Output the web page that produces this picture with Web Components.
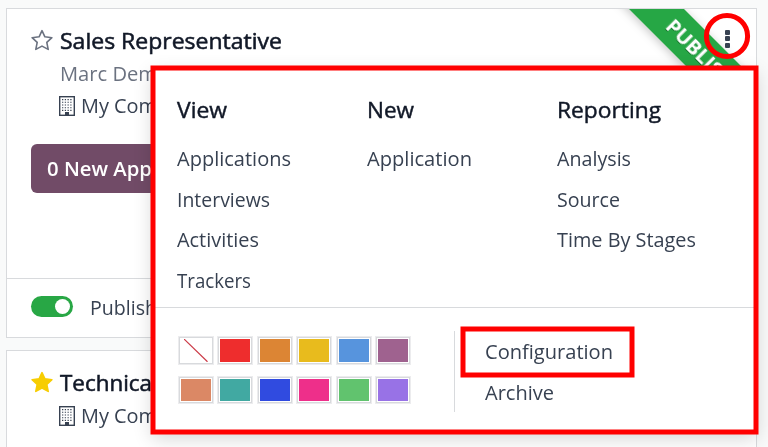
<!DOCTYPE html>
<html lang="en"><head><meta charset="utf-8"><title>Job positions</title>
<style>
html,body{margin:0;width:768px;height:447px;overflow:hidden}
body{background:#f9fafa;font-family:"Open Sans","Noto Sans",sans-serif;font-size:20.4px;color:#374151}
</style></head><body>
<job-board></job-board>
<script>
function define(name, html, setup){
  const t=document.createElement('template');t.innerHTML=html;
  customElements.define(name,class extends HTMLElement{
    constructor(){super();this.attachShadow({mode:'open'}).append(t.content.cloneNode(true));}
    connectedCallback(){if(setup)setup(this,this.shadowRoot);}
  });
}
/* Single line label condensed or expanded to the width given in "w". */
define('fit-label',`<style>:host{display:block;height:28px;line-height:28px;white-space:nowrap}
span{display:inline-block;transform-origin:0 50%}</style><span><slot></slot></span>`,(el,r)=>{
  const s=r.querySelector('span'),w=+el.getAttribute('w');
  el.style.width=w+'px';
  s.style.transform='none';
  const n=s.getBoundingClientRect().width;
  if(n)s.style.transform='scaleX('+w/n+')';
});
define('star-icon',`<style>:host{display:block;width:22px;height:22px;flex:none}svg{display:block}
path{fill:none;stroke:#6b7280;stroke-width:1.6;stroke-linejoin:round}:host([on]) path{fill:#f7cd02;stroke:#f7cd02}</style>
<svg width="22" height="22" viewBox="0 0 22 22"><path d="M11 1.6l2.9 6.2 7 .9-5.1 4.7 1.4 7L11 17.1l-6.2 3.3 1.4-7L1.1 8.7l7-.9z"/></svg>`);
define('building-icon',`<style>:host{display:block;width:16px;height:20px}svg{display:block}</style>
<svg width="16" height="20" viewBox="0 0 16 20"><rect x=".7" y=".7" width="14.6" height="18.6" fill="#fff" stroke="#374151" stroke-width="1.4"/>
<g stroke="#374151" stroke-width="1.1" stroke-dasharray="1.3 1.45"><path d="M3 3.6h10.2M3 6.3h10.2M3 9h10.2M3 11.7h10.2M3 14.4h10.2"/></g><path d="M6 19v-3h4v3z" fill="#374151"/></svg>`);
define('toggle-switch',`<style>:host{display:flex;box-sizing:border-box;width:42px;height:21px;border-radius:11px;background:#28a745;padding:3px;justify-content:flex-end}
i{width:15px;height:15px;border-radius:50%;background:#fff}</style><i></i>`);
define('job-card',`<style>:host{display:block;box-sizing:border-box;width:751px;background:#fff;border:1px solid #d8dadd;padding:0 24px;overflow:hidden;position:relative;flex:none}
.title{display:flex;gap:7px;font-size:22px;-webkit-text-stroke:.55px #111827;color:#111827}</style>
<div class="title"><slot name="star"></slot><slot name="title"></slot></div><slot></slot>`);
define('published-ribbon',`<style>:host{position:absolute;right:0;top:0;width:150px;height:90px}svg{display:block}
text{font:700 19.5px "Open Sans",sans-serif;fill:#fff}</style>
<svg width="150" height="90" viewBox="606 9 150 90"><defs><filter id="s" x="-20%" y="-50%" width="140%" height="200%"><feDropShadow dx="0" dy="3" stdDeviation="5" flood-opacity=".22"/></filter>
<filter id="t"><feDropShadow dx="0" dy="1" stdDeviation=".7" flood-opacity=".35"/></filter></defs>
<path filter="url(#s)" d="M608-12h55l110 110h-55z" fill="#28a745"/>
<text filter="url(#t)" transform="translate(664.5 27.5) rotate(45)" textLength="71" lengthAdjust="spacingAndGlyphs">PUBLIS</text></svg>`);
define('menu-column',`<style>:host{display:block;width:190px}h3{margin:0 0 21px;font-size:22px;font-weight:400;-webkit-text-stroke:.45px #111827;color:#111827;line-height:28px}
.items{display:grid;grid-auto-rows:28px;row-gap:12.6px}</style><h3><slot name="heading"></slot></h3><div class="items"><slot></slot></div>`);
define('color-swatch',`<style>:host{display:block;box-sizing:border-box;border:1px solid #ececee;background:#d8dadd;padding:1px}
div{box-sizing:border-box;height:100%;border:1px solid #fff;background:var(--c,#fff)}svg{display:none}:host([none]) svg{display:block;margin-left:3px}</style>
<div><svg width="24" height="23"><path d="M0 0l23.5 22.8" stroke="#cb3946" stroke-width="1.2"/></svg></div>`,(el)=>el.style.setProperty('--c',el.getAttribute('color')||'#fff'));
define('color-picker',`<style>:host{display:grid;grid-template-columns:repeat(6,36px);grid-template-rows:29px 28px;row-gap:11px;column-gap:3.4px;width:233px}</style>
<color-swatch none></color-swatch>`+['#ee2d2d','#dc8534','#e8bb1d','#5794dd','#9f628f','#db8865','#41a9a2','#304be0','#ee2f8a','#61c36e','#9872e6'].map(c=>`<color-swatch color="${c}"></color-swatch>`).join(''));
define('card-menu',`<style>:host{position:absolute;left:153px;top:68px;width:603px;height:364px;box-sizing:border-box;background:#fff;box-shadow:0 6px 18px 1px rgba(0,0,0,.16);padding-top:27px}
.top{display:flex;padding-left:24px;height:212px;border-bottom:1px solid #d8dadd}
.bottom{display:flex;padding:23px 0 0 25px}color-picker{margin-top:5px}
.links{margin-left:43px;border-left:1px solid #d8dadd;height:81px;padding-left:30px;box-sizing:border-box;display:grid;grid-template-rows:28px 28px;row-gap:12.6px;align-content:start;padding-top:6px}</style>
<div class="top">
<menu-column><fit-label slot="heading" w="50">View</fit-label><fit-label w="114">Applications</fit-label><fit-label w="93">Interviews</fit-label><fit-label w="82">Activities</fit-label><fit-label w="74">Trackers</fit-label></menu-column>
<menu-column><fit-label slot="heading" w="47">New</fit-label><fit-label w="105">Application</fit-label></menu-column>
<menu-column><fit-label slot="heading" w="104">Reporting</fit-label><fit-label w="74">Analysis</fit-label><fit-label w="63">Source</fit-label><fit-label w="139">Time By Stages</fit-label></menu-column>
</div>
<div class="bottom"><color-picker></color-picker><div class="links"><fit-label w="128">Configuration</fit-label><fit-label w="69">Archive</fit-label></div></div>`);
define('highlight-marks',`<style>:host{position:absolute;inset:0}svg{display:block}</style>
<svg width="768" height="447" fill="none" stroke="#f00" stroke-width="5"><rect x="153" y="68" width="603" height="364"/><rect x="463" y="329" width="169" height="46"/><circle cx="727" cy="36" r="20.6"/></svg>`);
define('kebab-icon',`<style>:host{position:absolute;left:725px;top:30px;display:grid;gap:1.3px}i{width:5px;height:5px;border-radius:1px;background:#374151}</style><i></i><i></i><i></i>`);
define('job-board',`<style>:host{display:flex;flex-direction:column;gap:12px;padding:8px 0 0 6px;position:relative;width:768px;height:447px;box-sizing:border-box;overflow:hidden}
.one{height:330px;padding-top:17px}.two{height:160px;padding-top:17px}
star-icon{margin-top:3px}
.mgr{color:#6b7280;padding:5px 0 0 29px}.co{display:flex;gap:6px;padding-left:28px;margin-top:4px}.co building-icon{margin-top:5px}
.btn{display:block;background:#714b67;color:#fff;font-weight:600;font-size:20px;border-radius:6px;height:49px;width:190px;box-sizing:border-box;padding:11px 16px;margin-top:25px}
.foot{display:flex;gap:17px;border-top:1px solid #d8dadd;margin:85px -24px 0;padding:14px 24px}.foot toggle-switch{margin-top:3px}.two .co{margin-top:5px}</style>
<job-card class="one"><star-icon slot="star"></star-icon><fit-label slot="title" w="222">Sales Representative</fit-label>
<div class="mgr"><fit-label w="97">Marc Dem</fit-label></div><div class="co"><building-icon></building-icon><fit-label w="76">My Com</fit-label></div>
<div class="btn"><fit-label w="105">0 New App</fit-label></div><div class="foot"><toggle-switch></toggle-switch><fit-label w="67">Publish</fit-label></div><published-ribbon></published-ribbon></job-card>
<job-card class="two"><star-icon on slot="star"></star-icon><fit-label slot="title" w="92">Technica</fit-label><div class="co"><building-icon></building-icon><fit-label w="76">My Com</fit-label></div></job-card>
<kebab-icon></kebab-icon><card-menu></card-menu><highlight-marks></highlight-marks>`);
</script></body></html>
